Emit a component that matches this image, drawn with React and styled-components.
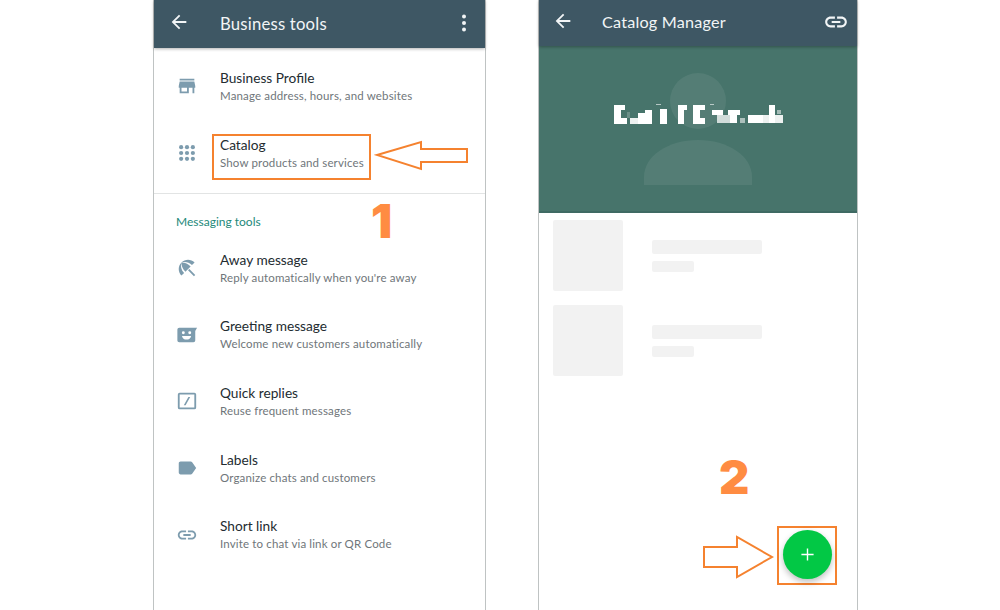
import React from 'react';
import styled, { createGlobalStyle } from 'styled-components';

const GlobalStyle = createGlobalStyle`
  html, body {
    margin: 0;
    height: 610px;
    overflow: hidden;
    background: #fff;
    font-family: Lato, "Noto Sans", sans-serif;
  }
`;

const ORANGE = '#f5822f';

const Page = styled.main`
  display: flex;
  gap: 52px;
  width: 1000px;
  height: 610px;
  padding-left: 153px;
  box-sizing: border-box;
  overflow: hidden;
  position: relative;
`;

const Phone = styled.section`
  position: relative;
  width: ${(p) => p.$width}px;
  height: 610px;
  box-sizing: border-box;
  border-left: 1px solid #bfc3c3;
  border-right: 1px solid #bfc3c3;
  display: flex;
  flex-direction: column;
`;

const Header = styled.header`
  height: ${(p) => p.$height}px;
  flex: none;
  background: #3e5764;
  color: #f2f5f6;
  display: flex;
  align-items: center;
  box-shadow: 0 1px 3px rgba(0, 0, 0, 0.3);
  position: relative;
  z-index: 1;
  padding-left: ${(p) => p.$pad}px;
  padding-right: ${(p) => p.$padRight}px;
  padding-bottom: 2px;
  box-sizing: border-box;
`;

const HeaderTitle = styled.h1`
  flex: 1;
  margin: ${(p) => p.$drop}px 0 ${(p) => p.$lift}px ${(p) => p.$gap}px;
  font-size: ${(p) => p.$size}px;
  font-weight: 400;
  letter-spacing: 0.2px;
`;

const BackSvg = styled.svg`
  width: 22px;
  height: 22px;
  flex: none;
  fill: currentColor;
  margin-bottom: 2px;
  margin-left: ${(p) => p.$nudge}px;
`;

const ToolList = styled.div`
  padding-top: 5px;
`;

const Row = styled.div`
  height: 66.7px;
  display: flex;
  align-items: center;
  padding-left: 22px;
  box-sizing: border-box;
`;

const RowIcon = styled.svg`
  width: 22px;
  height: 22px;
  flex: none;
  fill: #7d9cae;
  margin-right: 22px;
`;

const RowText = styled.div`
  display: flex;
  flex-direction: column;
  gap: 2px;
`;

const RowTitle = styled.div`
  font-size: 13.7px;
  line-height: 16px;
  color: #232c31;
`;

const RowSub = styled.div`
  font-size: 11.5px;
  line-height: 15px;
  color: #6f767a;
  letter-spacing: 0.15px;
`;

const Divider = styled.hr`
  margin: 7px 0 0;
  border: 0;
  border-top: 1px solid #e2e4e4;
`;

const SectionLabel = styled.div`
  font-size: 12px;
  line-height: 16px;
  color: #24897a;
  padding: 20px 0 4.4px 22px;
`;

const Hero = styled.div`
  height: 167px;
  flex: none;
  background: #47746b;
  border-bottom: 2px solid #3f6a63;
  box-sizing: border-box;
  display: flex;
  justify-content: center;
  padding-top: 27px;
  position: relative;
`;

const Silhouette = styled.svg`
  width: 108px;
  height: 112px;
  fill: rgba(255, 255, 255, 0.07);
`;

const NameMosaic = styled.svg`
  position: absolute;
  left: 74px;
  top: 57px;
  width: 170px;
  height: 22px;
`;

const SkeletonList = styled.div`
  display: flex;
  flex-direction: column;
  gap: 14.5px;
  padding: 7px 0 0 14px;
`;

const SkeletonRow = styled.div`
  display: flex;
  align-items: center;
  gap: 29px;
`;

const Thumb = styled.div`
  width: 70px;
  height: 70.5px;
  border-radius: 2px;
  background: #f2f2f2;
`;

const Lines = styled.div`
  display: flex;
  flex-direction: column;
  gap: 7px;
  margin-top: 2px;
`;

const Line = styled.div`
  width: ${(p) => p.$width}px;
  height: ${(p) => p.$height}px;
  border-radius: 2px;
  background: #f2f2f2;
`;

const Fab = styled.button`
  position: absolute;
  left: 243.5px;
  top: 529.5px;
  width: 49px;
  height: 49px;
  padding: 0;
  border: 0;
  border-radius: 50%;
  background: #02c845;
  box-shadow: 0 3px 6px rgba(0, 0, 0, 0.25);
  display: flex;
  align-items: center;
  justify-content: center;
`;

const Highlight = styled.div`
  position: absolute;
  left: ${(p) => p.$x}px;
  top: ${(p) => p.$y}px;
  width: ${(p) => p.$w}px;
  height: ${(p) => p.$h}px;
  box-sizing: border-box;
  border: 2px solid ${ORANGE};
`;

const Arrow = styled.svg`
  position: absolute;
  left: ${(p) => p.$x}px;
  top: ${(p) => p.$y}px;
  fill: #fff;
  stroke: ${ORANGE};
  stroke-width: 2;
`;

const StepNumber = styled.div`
  position: absolute;
  left: ${(p) => p.$x}px;
  top: ${(p) => p.$y}px;
  font-family: Inter, "Open Sans", sans-serif;
  font-size: 47px;
  line-height: 47px;
  font-weight: 900;
  color: #ff8c42;
`;

const BackIcon = ({ nudge = 0 }) => (
  <BackSvg viewBox="0 0 24 24" $nudge={nudge}>
    <path d="M20 11H7.83l5.59-5.59L12 4l-8 8 8 8 1.41-1.41L7.83 13H20v-2z" />
  </BackSvg>
);

const icons = {
  store: <path d="M20 4H4v2h16V4zm1 10v-2l-1-5H4l-1 5v2h1v6h10v-6h4v6h2v-6h1zm-9 4H6v-4h6v4z" />,
  grid: (
    <g>
      {[5.6, 12, 18.4].map((y) =>
        [5.6, 12, 18.4].map((x) => <circle key={`${x}-${y}`} cx={x} cy={y} r="2.3" />)
      )}
    </g>
  ),
  beach: (
    <path d="M13.127 14.56l1.43-1.43 6.44 6.443L19.57 21zm4.293-5.73l2.86-2.86c-3.95-3.95-10.35-3.96-14.3-.02 3.93-1.3 8.31-.25 11.44 2.88zM5.95 5.98c-3.94 3.95-3.93 10.35.02 14.3l2.86-2.86C5.7 14.29 4.65 9.91 5.95 5.98zm.02-.02l-.01.01c-.38 3.01 1.17 6.88 4.3 10.02l5.73-5.73c-3.13-3.13-7.01-4.68-10.02-4.3z" />
  ),
  greeting: (
    <path
      fillRule="evenodd"
      d="M3.5 4H23l-2 3.5V18a2 2 0 0 1-2 2H3.5a2 2 0 0 1-2-2V6a2 2 0 0 1 2-2zM8 8a1.6 1.6 0 1 0 0 3.2A1.6 1.6 0 0 0 8 8zm7 0a1.6 1.6 0 1 0 0 3.2A1.6 1.6 0 0 0 15 8zM6.5 13c.4 2.3 2.5 4 5 4s4.6-1.7 5-4z"
    />
  ),
  quick: (
    <path
      fillRule="evenodd"
      d="M4 3h16a2 2 0 0 1 2 2v14a2 2 0 0 1-2 2H4a2 2 0 0 1-2-2V5a2 2 0 0 1 2-2zm0 2v14h16V5zm9.5 2.5h2L10.500 16.500h-2z"
    />
  ),
  label: (
    <path d="M17.63 5.84C17.27 5.33 16.67 5 16 5L5 5.01C3.9 5.01 3 5.9 3 7v10c0 1.1.9 1.99 2 1.99L16 19c.67 0 1.27-.33 1.63-.84L22 12l-4.37-6.16z" />
  ),
  link: (
    <path d="M3.9 12c0-1.71 1.39-3.1 3.1-3.1h4V7H7c-2.76 0-5 2.24-5 5s2.24 5 5 5h4v-1.9H7c-1.71 0-3.1-1.39-3.1-3.1zM8 13h8v-2H8v2zm9-6h-4v1.9h4c1.71 0 3.1 1.39 3.1 3.1s-1.39 3.1-3.1 3.1h-4V17h4c2.76 0 5-2.24 5-5s-2.24-5-5-5z" />
  ),
};

const ToolRow = ({ icon, title, sub }) => (
  <Row>
    <RowIcon viewBox="0 0 24 24">{icons[icon]}</RowIcon>
    <RowText>
      <RowTitle>{title}</RowTitle>
      <RowSub>{sub}</RowSub>
    </RowText>
  </Row>
);

// pixelated name, [x, y, w, h, opacity]
const mosaic = [
  [1, 2, 7, 19, 1], [8, 2, 4, 5, 1], [8, 15, 6, 6, 1], [14, 9, 3, 6, 0.2],
  [17, 15, 8, 6, 0.9], [25, 10, 7, 11, 1], [32, 7, 7, 14, 1], [43, 1, 5, 1, 0.6],
  [47, 6, 7, 15, 1], [65, 2, 6, 19, 1], [71, 2, 3, 5, 1], [80, 2, 7, 19, 1],
  [87, 2, 5, 5, 1], [84, 15, 8, 6, 1], [97, 1, 4, 1, 0.6], [99, 7, 11, 5, 1],
  [104, 12, 13, 8, 0.75], [115, 7, 12, 5, 1], [117, 12, 7, 8, 1], [127, 15, 5, 5, 0.55],
  [135, 12, 15, 8, 1], [150, 12, 20, 8, 0.9], [156, 2, 6, 18, 1], [164, 7, 4, 4, 0.5],
];

const App = () => (
  <>
    <GlobalStyle />
    <Page>
      <Phone $width={333}>
        <Header $height={48} $pad={14} $padRight={9}>
          <BackIcon />
          <HeaderTitle $gap={30} $size={16.7} $drop={2} $lift={0}>Business tools</HeaderTitle>
          <svg width="24" height="24" viewBox="0 0 24 24" fill="currentColor">
            <circle cx="12" cy="5.5" r="2" />
            <circle cx="12" cy="12" r="2" />
            <circle cx="12" cy="18.5" r="2" />
          </svg>
        </Header>
        <ToolList>
          <ToolRow icon="store" title="Business Profile" sub="Manage address, hours, and websites" />
          <ToolRow icon="grid" title="Catalog" sub="Show products and services" />
        </ToolList>
        <Divider />
        <SectionLabel>Messaging tools</SectionLabel>
        <ToolRow icon="beach" title="Away message" sub="Reply automatically when you're away" />
        <ToolRow icon="greeting" title="Greeting message" sub="Welcome new customers automatically" />
        <ToolRow icon="quick" title="Quick replies" sub="Reuse frequent messages" />
        <ToolRow icon="label" title="Labels" sub="Organize chats and customers" />
        <ToolRow icon="link" title="Short link" sub="Invite to chat via link or QR Code" />

        <Highlight $x={58} $y={134} $w={159} $h={46} />
        <Arrow $x={220} $y={140} width="95" height="31" viewBox="0 0 95 31">
          <polygon points="3,15 47,2 47,9 93,9 93,22 47,22 47,29" />
        </Arrow>
        <StepNumber $x={217} $y={197}>1</StepNumber>
      </Phone>

      <Phone $width={320}>
        <Header $height={46} $pad={14} $padRight={8}>
          <BackIcon nudge={-1} />
          <HeaderTitle $gap={28} $size={16.2} $drop={0} $lift={2}>Catalog Manager</HeaderTitle>
          <svg width="26" height="26" viewBox="0 0 24 24" fill="currentColor">{icons.link}</svg>
        </Header>
        <Hero>
          <Silhouette viewBox="0 0 108 112">
            <circle cx="54" cy="28" r="28" />
            <path d="M0 112V104C0 83 24 67 54 67s54 16 54 37v8z" />
          </Silhouette>
          <NameMosaic viewBox="0 0 170 22">
            {mosaic.map(([x, y, w, h, o]) => (
              <rect key={`${x}-${y}`} x={x} y={y} width={w} height={h} fill="#fff" fillOpacity={o} />
            ))}
          </NameMosaic>
        </Hero>
        <SkeletonList>
          {[0, 1].map((n) => (
            <SkeletonRow key={n}>
              <Thumb />
              <Lines>
                <Line $width={110} $height={14} />
                <Line $width={42} $height={11} />
              </Lines>
            </SkeletonRow>
          ))}
        </SkeletonList>

        <StepNumber $x={180} $y={453}>2</StepNumber>
        <Arrow $x={163} $y={535} width="73" height="44" viewBox="0 0 73 44">
          <polygon points="2,12 35,12 35,2 70,22 35,42 35,32 2,32" />
        </Arrow>
        <Highlight $x={238} $y={526} $w={60} $h={59} />
        <Fab aria-label="Add">
          <svg width="15" height="15" viewBox="0 0 16 16" stroke="#fff" strokeWidth="1.5">
            <path d="M8 1.5v13M1.5 8h13" />
          </svg>
        </Fab>
      </Phone>
    </Page>
  </>
);

export default App;
